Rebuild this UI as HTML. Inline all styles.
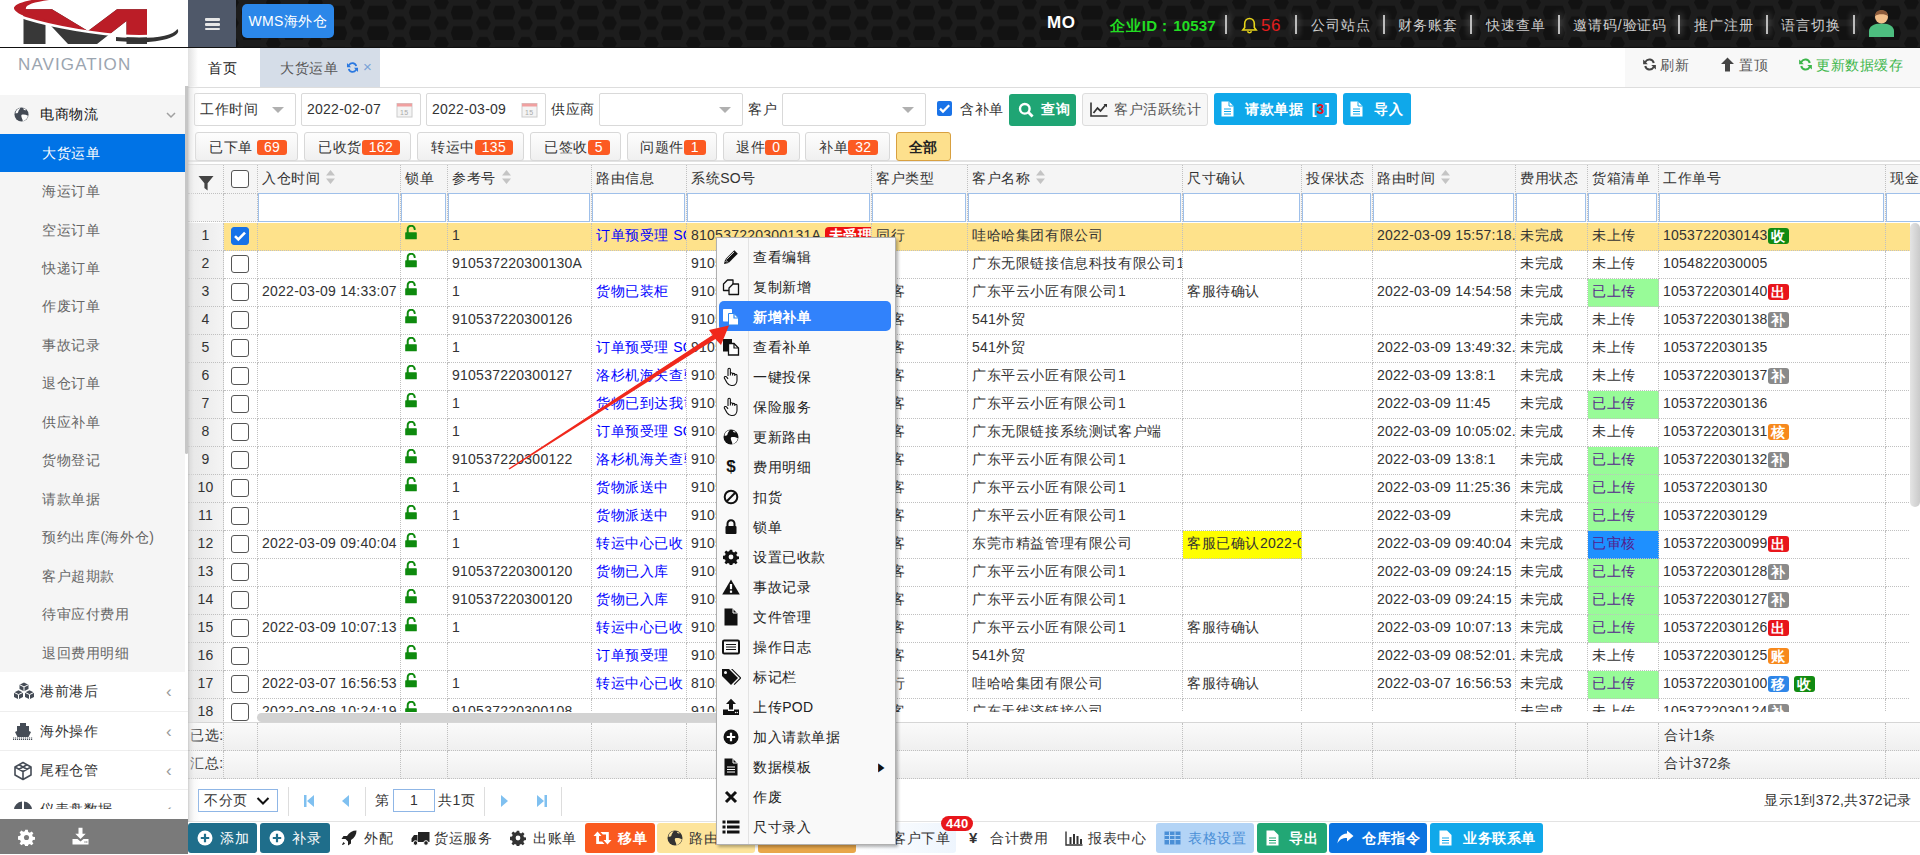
<!DOCTYPE html>
<html><head><meta charset="utf-8">
<style>
*{box-sizing:border-box}
html,body{margin:0;padding:0;width:1920px;height:855px;overflow:hidden;background:#fff;font-family:"Liberation Sans",sans-serif;font-size:14px;color:#333;letter-spacing:0.25px}
.abs{position:absolute}
/* logo */
#logo{position:absolute;left:0;top:0;width:188px;height:47px;background:#fff;overflow:hidden}
#hdrline{position:absolute;left:0;top:47px;width:1920px;height:1px;background:#111}
#header{position:absolute;left:188px;top:0;width:1732px;height:47px;background:#1a1a1a;overflow:hidden}
#burger{position:absolute;left:0;top:0;width:48px;height:47px;background:#4f5869}
#burger i{position:absolute;left:17px;width:15px;height:2.5px;background:#e6e6e6;border-radius:1px}
#wms{position:absolute;left:54px;top:4px;width:92px;height:34px;background:#2b87e9;border-radius:5px;color:#fff;font-size:14px;line-height:34px;text-align:center}
.hd{position:absolute;top:1px;height:47px;line-height:49px;color:#cfcfcf;font-size:14px;white-space:nowrap;letter-spacing:0.9px}
.hsep{position:absolute;top:15px;width:2px;height:19px;background:#bdbdbd;box-shadow:0 0 6px 2px rgba(255,255,255,0.18)}
/* sidebar */
#side{position:absolute;left:0;top:48px;width:188px;height:761px;background:#fff;overflow:hidden}
.navt{position:absolute;left:18px;top:6px;font-size:17px;letter-spacing:1.1px;color:#9ba5b0;line-height:22px}
.sub{position:relative;margin-top:46.7px;width:185px;background:#f5f5f5}
.mi{position:relative;height:38.9px;line-height:38.9px;color:#111;font-size:14px}
.mic{position:absolute;left:14px;top:12px;height:15px;line-height:0}.mic svg,.mic2 svg{display:block}
.mi .mt{position:absolute;left:40px}
.chev{position:absolute;left:166px;top:17px}
.si{height:38.47px;line-height:38.47px;padding-left:42px;color:#666;font-size:14px}
.si.act{background:#0073e6;color:#fff}
.mi2{position:relative;height:39.4px;line-height:39px;border-bottom:1px solid #eee;color:#333;background:#fff}
.mi2 .mt{position:absolute;left:40px}
.mic2{position:absolute;left:13px;top:10px;width:22px;height:20px;line-height:0}
.chl{position:absolute;left:166px;top:0;color:#999;font-size:17px}
#sfoot{position:absolute;left:0;top:819px;width:188px;height:35px;background:#7a7a7a}
/* content */
#content{position:absolute;left:188px;top:48px;width:1732px;height:807px;background:#fff;overflow:hidden}
#tabs{position:absolute;left:0;top:0;width:1732px;height:40px;border-bottom:1px solid #ddd;background:#fff}
.tab{position:absolute;top:0;height:39px;line-height:40px;font-size:14px}
#tabr{position:absolute;left:1437px;top:0;width:295px;height:39px;background:#f8f8f8}
.tr{position:absolute;top:-2px;line-height:38px;font-size:14px;color:#555;white-space:nowrap}
#shadow{position:absolute;left:188px;top:86px;width:12px;height:736px;z-index:5;background:linear-gradient(to right,rgba(190,190,190,0.75) 0px,rgba(215,215,215,0.55) 2px,rgba(235,235,235,0.3) 6px,rgba(255,255,255,0) 12px)}
#sthumb{position:absolute;left:185px;top:86px;width:3px;height:368px;background:#c6c6c6;border-radius:0 0 2px 2px;z-index:5}
.inp{position:absolute;height:33px;border:1px solid #d9d9d9;border-radius:2px;background:#fff;font-size:14px;line-height:31px;padding-left:5px;color:#333}
.tri{position:absolute;width:0;height:0;border-left:6px solid transparent;border-right:6px solid transparent;border-top:6px solid #b0b0b0}
.lbl{position:absolute;font-size:14px;color:#333;line-height:20px}
.btn{position:absolute;height:32px;border-radius:3px;color:#fff;font-size:14px;line-height:32px;white-space:nowrap}
.sbtn{position:absolute;top:84px;height:29px;border:1px solid #d8d8d8;border-radius:3px;background:linear-gradient(#fdfdfd,#f0f0f0);font-size:14px;line-height:28px;color:#333;white-space:nowrap}
.cnt{display:inline-block;background:#fc5a22;color:#fff;font-size:14px;line-height:15px;height:15px;padding:0 7px;border-radius:3px;vertical-align:0px}
/* grid */
#grid{position:absolute;left:0;top:116px;width:1732px;height:558px;overflow:hidden;border-top:1px solid #ddd}
.ghead,.gfilt{position:absolute;left:0;width:1732px;height:29px;background:#f5f5f5}
.c{position:absolute;top:0;height:100%;white-space:nowrap;overflow:hidden;border-right:1px dotted #c0c0c0;border-bottom:1px dotted #c0c0c0}
.hc{line-height:25px;padding-left:4px;color:#333}
.ht{vertical-align:middle}
.sort{vertical-align:middle;margin-left:5px;margin-top:-2px}
.funnel{position:absolute;left:10px;top:10px}
.cb{display:inline-block;width:18px;height:18px;border:1px solid #555;border-radius:3px;background:#fff;position:absolute;left:7px;top:5px}
.gr .cb{top:4px}
.cb.on{background:#1672e8;border-color:#1672e8}
.cb.on svg{position:absolute;left:-1px;top:-1px}
.fc{overflow:visible}
.fi{position:absolute;left:0;top:-1px;right:1px;bottom:-1px;border:1px solid #9fc0ea;background:#fff}
#rows{position:absolute;left:0;top:58px;width:1732px;height:500px;overflow:hidden}
.gr{position:absolute;left:0;width:1732px;height:28px;background:#fff}
.gr.sel{background:#fee28b}
.dc{line-height:25px;padding-left:4px;color:#333}
.rnc{background:linear-gradient(to right,#e6e6e6,#f4f4f4);text-align:center;padding-left:0}

.rn{display:block;text-align:center}
.cbc{padding-left:0}
.lockc svg{position:absolute;left:4px;top:2px}
.lnk{color:#0000ff}
.wsl{display:inline-block;background:#ee1111;color:#fff;border-radius:4px;padding:0 4px;line-height:17px;font-weight:bold}
.bdg{display:inline-block;color:#fff;font-weight:bold;font-size:14px;line-height:16px;height:16px;padding:0 3px;border-radius:3px;margin-left:1px;vertical-align:-1px}
#hscroll{position:absolute;left:69px;top:547px;width:1663px;height:10px;background:#fff}
#hthumb{position:absolute;left:0;top:1px;width:620px;height:9px;background:#d3d3d3;border-radius:5px}
#vscroll{position:absolute;left:1722px;top:58px;width:10px;height:490px;background:#fff}
#vthumb{position:absolute;left:0;top:0;width:10px;height:284px;background:linear-gradient(to right,#e4e4e4,#cacaca);border-radius:5px}
#summ{position:absolute;left:0;top:674px;width:1732px;height:59px;background:#f4f4f4;border-top:1px solid #d6d6d6;border-bottom:2px solid #dedede}
.sr{position:absolute;left:0;width:1732px;height:28px;background:linear-gradient(#fafafa,#efefef)}
#pager{position:absolute;left:0;top:731px;width:1732px;height:43px;background:#fff;border-bottom:1px solid #e3e3e3}
.psep{position:absolute;top:8px;width:1px;height:29px;background:#ddd}
#btool{position:absolute;left:0;top:775px;width:1732px;height:32px;background:#fff}
.tb{position:absolute;top:0;height:30px;line-height:30px;font-size:14px;color:#333;white-space:nowrap;border-radius:3px}
.tb svg{vertical-align:middle}
/* menu */
#cmenu{position:absolute;left:716px;top:237px;width:180px;height:608px;background:#f9f9f9;border:1px solid #b0b0b0;box-shadow:2px 2px 3px rgba(0,0,0,0.3)}
#cmenu .sepl{position:absolute;left:31px;top:0;width:1px;height:606px;background:#e3e3e3}
.mitem{position:relative;height:30px;line-height:30px;color:#222;font-size:14px;margin-left:2px;width:172px}
.mitem.mact{background:#3182fb;color:#fff;border-radius:5px}
.mico{position:absolute;left:1px;top:1px;width:22px;height:30px;display:flex;align-items:center;justify-content:center}
.mtxt{position:absolute;left:34px;top:1px}
.mact .mtxt{font-weight:bold}
.marr{position:absolute;left:158px;top:1px;font-size:12px;color:#111;transform:scaleX(0.7)}
.cj{letter-spacing:0.6px}
.hd .cj{letter-spacing:0.9px}
</style></head><body>

<div id="logo">
<svg width="188" height="47" viewBox="0 0 188 47">
 <defs><clipPath id="above"><path d="M0 0H188V29C172 35 150 37.5 120 35.5C80 32 40 24 16 15L0 15z"/></clipPath></defs>
 <path d="M23.5 9.3H52L88 31L117 9.3H147V44H126.5V21L97 44H68L45.5 20V44H23.5z" fill="#383838"/>
 <path d="M23.5 9.3H52L88 31L117 9.3H147V44H126.5V21L97 44H68L45.5 20V44H23.5z" fill="#bb1d27" clip-path="url(#above)"/>
 <path d="M14 7.5C16 3 30 -1 50 -2L70 -2C40 0 24 4 26 9C27 13 40 18 60 24L52 25C30 19 13 13 14 7.5z" fill="#bb1d27"/>
 <path d="M16 15C40 24 80 32 120 35.5C150 37.5 172 35 177 29" stroke="#fff" stroke-width="2.6" fill="none"/>
 <path d="M116 37C150 39.5 172 37 177.5 29C181 34 172 41 140 42.5L116 41z" fill="#333"/>
</svg>
</div>
<div id="hdrline"></div>

<div id="header">
<svg width="1732" height="47" style="position:absolute;left:0;top:0">
<defs><pattern id="hex" width="42" height="20.5" patternUnits="userSpaceOnUse" x="0" y="0"><rect width="42" height="20.5" fill="#1d1d1d"/><path d="M10.75 12.50L13.25 5.50H30.75L33.25 12.50L30.75 19.50H13.25zM-6.10 2.50L-2.60 -4.25H5.40L8.90 2.50L5.40 9.25H-2.60zM35.90 2.50L39.40 -4.25H47.40L50.90 2.50L47.40 9.25H39.40zM-6.10 23.00L-2.60 16.25H5.40L8.90 23.00L5.40 29.75H-2.60zM35.90 23.00L39.40 16.25H47.40L50.90 23.00L47.40 29.75H39.40z" fill="#121212"/></pattern></defs>
<rect width="1732" height="47" fill="url(#hex)"/>
</svg>
<div id="burger"><i style="top:18px"></i><i style="top:23px"></i><i style="top:27.5px"></i></div>
<div id="wms">WMS<span class="cj">海外仓</span></div>
<div class="hd" style="left:859px;color:#fff;font-weight:bold;font-size:17px;line-height:44px;letter-spacing:0.5px">MO</div>
<div class="hd" style="left:922px;color:#22dd22;font-weight:bold;font-size:15px;letter-spacing:0.2px"><span class="cj">企业</span>ID<span class="cj">：</span>10537</div>
<div class="hsep" style="left:1037px"></div>
<svg class="abs" style="left:1053px;top:17px" width="17" height="17" viewBox="0 0 17 17"><path d="M8.5 1.5c-3 0-4.8 2.3-4.8 5.3v3.6L1.8 13h13.4l-1.9-2.6V6.8c0-3-1.8-5.3-4.8-5.3z" fill="none" stroke="#e8d51a" stroke-width="1.6"/><path d="M6.5 14.3c0.4 1 1.1 1.5 2 1.5s1.6-0.5 2-1.5" fill="none" stroke="#e8d51a" stroke-width="1.6"/></svg>
<div class="hd" style="left:1073px;color:#e21d1d;font-size:17px;letter-spacing:0.5px">56</div>
<div class="hsep" style="left:1107px"></div>
<div class="hd" style="left:1123px"><span class="cj">公司站点</span></div>
<div class="hsep" style="left:1195px"></div>
<div class="hd" style="left:1210px"><span class="cj">财务账套</span></div>
<div class="hsep" style="left:1282px"></div>
<div class="hd" style="left:1298px"><span class="cj">快速查单</span></div>
<div class="hsep" style="left:1370px"></div>
<div class="hd" style="left:1385px"><span class="cj">邀请码</span>/<span class="cj">验证码</span></div>
<div class="hsep" style="left:1490px"></div>
<div class="hd" style="left:1506px"><span class="cj">推广注册</span></div>
<div class="hsep" style="left:1578px"></div>
<div class="hd" style="left:1593px"><span class="cj">语言切换</span></div>
<div class="hsep" style="left:1665px"></div>
<svg class="abs" style="left:1680px;top:9px" width="27" height="28" viewBox="0 0 27 28"><path d="M1 28v-6c0-4 4-7.5 12.5-7.5S26 18 26 22v6z" fill="#4dbd7f"/><circle cx="13.5" cy="8" r="6.5" fill="#f3c08c"/><path d="M7 7.2c0-4 2.8-6.2 6.5-6.2S20 3.2 20 7.2c-1.5-1.5-3.8-2-6.5-2S8.5 5.7 7 7.2z" fill="#8c5a3a"/></svg>
</div>

<div id="side">
<div class="navt">NAVIGATION</div>
<div class="sub">
<div class="mi top1"><span class="mic"><svg width="15" height="15" viewBox="0 0 16 16"><circle cx="8" cy="8" r="7.5" fill="#444b55"/><path d="M8.2 8.3C9.8 7.6 12.6 8 14.9 9.3 14.5 12.2 12.3 14.6 9.3 15.3 9.6 13.6 8.6 12.8 8.3 11.6 8 10.5 7.4 9 8.2 8.3z M2.6 3.6C3.6 2.4 5 1.5 6.6 1.1 6.3 2.3 5.4 3 4.9 3.9 4.4 4.9 4.6 6 3.4 6.6 2.8 6.9 2.2 6.6 1.5 6.8 1.6 5.6 2 4.5 2.6 3.6z M9.8 1.4C11 1.7 12.1 2.3 13 3.1 12.2 3.6 11 3.4 10.4 2.9z" fill="#fff"/></svg></span><span class="mt"><span class="cj">电商物流</span></span><svg class="chev" width="10" height="7" viewBox="0 0 10 7"><path d="M1 1l4 4 4-4" stroke="#a0a0a0" stroke-width="1.5" fill="none"/></svg></div>
<div class="si act"><span class="cj">大货运单</span></div>
<div class="si"><span class="cj">海运订单</span></div>
<div class="si"><span class="cj">空运订单</span></div>
<div class="si"><span class="cj">快递订单</span></div>
<div class="si"><span class="cj">作废订单</span></div>
<div class="si"><span class="cj">事故记录</span></div>
<div class="si"><span class="cj">退仓订单</span></div>
<div class="si"><span class="cj">供应补单</span></div>
<div class="si"><span class="cj">货物登记</span></div>
<div class="si"><span class="cj">请款单据</span></div>
<div class="si"><span class="cj">预约出库</span>(<span class="cj">海外仓</span>)</div>
<div class="si"><span class="cj">客户超期款</span></div>
<div class="si"><span class="cj">待审应付费用</span></div>
<div class="si"><span class="cj">退回费用明细</span></div>
</div>
<div class="mi2"><span class="mic2"><svg width="22" height="18" viewBox="0 0 22 18"><path d="M11 0.5l4.5 2.2v4.3L11 9.2 6.5 7V2.7z M5.5 8.2L10 10.4v4.6L5.5 17.2 1 15V10.4z M16.5 8.2L21 10.4v4.6l-4.5 2.2L12 15V10.4z" fill="#454c56"/><path d="M6.5 2.7L11 4.9l4.5-2.2 M1 10.4l4.5 2.2 4.5-2.2 M12 10.4l4.5 2.2 4.5-2.2 M11 4.9v4.3 M5.5 12.6v4.6 M16.5 12.6v4.6" stroke="#fff" stroke-width="1" fill="none"/></svg></span><span class="mt"><span class="cj">港前港后</span></span><span class="chl">&lsaquo;</span></div>
<div class="mi2"><span class="mic2"><svg width="20" height="18" viewBox="0 0 20 18"><path d="M7 1h6v3h3v5l2 1-2.5 5h-11L2 10l2-1V4h3z" fill="#454c56"/><path d="M0 16h20M0 17.5h20" stroke="#454c56" stroke-width="1" stroke-dasharray="1.2 0.8"/></svg></span><span class="mt"><span class="cj">海外操作</span></span><span class="chl">&lsaquo;</span></div>
<div class="mi2"><span class="mic2"><svg width="20" height="20" viewBox="0 0 20 20"><path d="M10 1.5l8 4.5v8L10 18.5 2 14V6z M2 6l8 4.5L18 6 M10 10.5v8 M6 3.8l8 4.5 M14 3.8L6 8.3" stroke="#454c56" stroke-width="1.6" fill="none" stroke-linejoin="round"/></svg></span><span class="mt"><span class="cj">尾程仓管</span></span><span class="chl">&lsaquo;</span></div>
<div class="mi2"><span class="mic2"><svg width="20" height="20" viewBox="0 0 20 20"><path d="M9 1.5A8.5 8.5 0 0 0 1 10h8z M11 1.5A8.5 8.5 0 0 1 19 10h-8z" fill="#454c56"/></svg></span><span class="mt"><span class="cj">仪表盘数据</span></span><span class="chl">&lsaquo;</span></div>
</div>
<div id="sfoot">
<svg class="abs" style="left:18px;top:10px" width="17" height="17" viewBox="0 0 16 16"><path d="M6.8 0.8h2.4l0.4 2 1.5 0.7 1.7-1.2 1.7 1.7-1.2 1.7 0.7 1.5 2 0.4v2.4l-2 0.4-0.7 1.5 1.2 1.7-1.7 1.7-1.7-1.2-1.5 0.7-0.4 2H6.8l-0.4-2-1.5-0.7-1.7 1.2-1.7-1.7 1.2-1.7-0.7-1.5-2-0.4V6.8l2-0.4 0.7-1.5-1.2-1.7 1.7-1.7 1.7 1.2 1.5-0.7z" fill="#fff"/><circle cx="8" cy="8" r="2.4" fill="#7a7a7a"/></svg>
<svg class="abs" style="left:71px;top:8px" width="19" height="18" viewBox="0 0 18 18"><path d="M7 0.8h4v6h3.2L9 12 3.8 6.8H7z" fill="#fff"/><path d="M1 12h5l3 2.5 3-2.5h5v5.5H1z" fill="#fff"/><circle cx="13.5" cy="15" r="0.7" fill="#7a7a7a"/><circle cx="15.3" cy="15" r="0.7" fill="#7a7a7a"/></svg>
</div>

<div id="content">
 <div id="tabs">
  <div class="tab" style="left:20px;color:#222"><span class="cj">首页</span></div>
  <div class="tab" style="left:72px;width:120px;height:39px;background:#d5dde8;color:#555;padding-left:20px"><span class="cj">大货运单</span>
   <svg class="abs" style="left:86px;top:13px" width="13" height="13" viewBox="0 0 16 16"><path d="M13.6 6.2A5.8 5.8 0 0 0 3 4.3L1.2 2.6V7.6h5L4.4 5.8A3.8 3.8 0 0 1 11.5 6.6z M2.4 9.8A5.8 5.8 0 0 0 13 11.7l1.8 1.7V8.4h-5l1.8 1.8A3.8 3.8 0 0 1 4.5 9.4z" fill="#2a78e0"/></svg>
   <span class="abs" style="left:103px;top:0;color:#79a2d6;font-size:15px;line-height:38px">×</span>
  </div>
  <div id="tabr">
   <svg class="abs" style="left:17px;top:9px" width="15" height="15" viewBox="0 0 16 16"><path d="M13.6 6.2A5.8 5.8 0 0 0 3 4.3L1.2 2.6V7.6h5L4.4 5.8A3.8 3.8 0 0 1 11.5 6.6z M2.4 9.8A5.8 5.8 0 0 0 13 11.7l1.8 1.7V8.4h-5l1.8 1.8A3.8 3.8 0 0 1 4.5 9.4z" fill="#444"/></svg>
   <span class="tr" style="left:35px"><span class="cj">刷新</span></span>
   <svg class="abs" style="left:95px;top:9px" width="15" height="15" viewBox="0 0 15 15"><path d="M7.5 0.5L14 7h-4v7.5H5V7H1z" fill="#444"/></svg>
   <span class="tr" style="left:114px"><span class="cj">置顶</span></span>
   <svg class="abs" style="left:173px;top:9px" width="15" height="15" viewBox="0 0 16 16"><path d="M13.6 6.2A5.8 5.8 0 0 0 3 4.3L1.2 2.6V7.6h5L4.4 5.8A3.8 3.8 0 0 1 11.5 6.6z M2.4 9.8A5.8 5.8 0 0 0 13 11.7l1.8 1.7V8.4h-5l1.8 1.8A3.8 3.8 0 0 1 4.5 9.4z" fill="#3cb64a"/></svg>
   <span class="tr" style="left:191px;color:#3cb64a"><span class="cj">更新数据缓存</span></span>
  </div>
 </div>
 <div class="abs" style="left:0;top:40px;width:1732px;height:74px;border-bottom:2px solid #e3e3e3"></div>

 <!-- toolbar row1 -->
 <div class="inp" style="left:6px;top:45px;width:102px"><span class="cj">工作时间</span><span class="tri" style="left:77px;top:13px"></span></div>
 <div class="inp" style="left:113px;top:45px;width:120px">2022-02-07
   <svg class="abs" style="left:94px;top:7px" width="17" height="17" viewBox="0 0 17 17"><rect x="1" y="2.5" width="15" height="13.5" fill="#f4f4f4" stroke="#ccc"/><rect x="1" y="2.5" width="15" height="3" fill="#f0a0a0"/><text x="4" y="13.5" font-size="7" fill="#aaa" font-family="Liberation Sans">15</text></svg></div>
 <div class="inp" style="left:238px;top:45px;width:120px">2022-03-09
   <svg class="abs" style="left:94px;top:7px" width="17" height="17" viewBox="0 0 17 17"><rect x="1" y="2.5" width="15" height="13.5" fill="#f4f4f4" stroke="#ccc"/><rect x="1" y="2.5" width="15" height="3" fill="#f0a0a0"/><text x="4" y="13.5" font-size="7" fill="#aaa" font-family="Liberation Sans">15</text></svg></div>
 <div class="lbl" style="left:363px;top:51px"><span class="cj">供应商</span></div>
 <div class="inp" style="left:411px;top:45px;width:144px"><span class="tri" style="left:119px;top:13px"></span></div>
 <div class="lbl" style="left:560px;top:51px"><span class="cj">客户</span></div>
 <div class="inp" style="left:594px;top:45px;width:144px"><span class="tri" style="left:119px;top:13px"></span></div>
 <div class="abs" style="left:749px;top:53px;width:15px;height:15px;background:#1a73e8;border-radius:2px"><svg width="15" height="15" viewBox="0 0 15 15" style="position:absolute;left:0;top:0"><path d="M3 7.6l3 3L12.2 4.2" stroke="#fff" stroke-width="2.2" fill="none"/></svg></div>
 <div class="lbl" style="left:772px;top:51px"><span class="cj">含补单</span></div>
 <div class="btn" style="left:821px;top:46px;width:67px;background:#1fa574"><svg class="abs" style="left:9px;top:8px" width="16" height="16" viewBox="0 0 16 16"><circle cx="6.8" cy="6.8" r="4.8" fill="none" stroke="#fff" stroke-width="2.4"/><path d="M10.3 10.3L14.6 14.6" stroke="#fff" stroke-width="2.8"/></svg><span class="abs" style="left:32px;top:-1px;font-weight:bold"><span class="cj">查询</span></span></div>
 <div class="btn" style="left:894px;top:45px;width:126px;height:33px;background:#f7f7f7;border:1px solid #ddd;color:#555;line-height:31px"><svg class="abs" style="left:7px;top:8px" width="18" height="15" viewBox="0 0 18 15"><path d="M1 0.5V14h16.5" stroke="#333" stroke-width="1.6" fill="none"/><path d="M3.5 11L7.5 6l3 3 5.5-6.5" stroke="#333" stroke-width="1.8" fill="none"/><path d="M13.5 2h3.5v3.5z" fill="#333"/></svg><span class="abs" style="left:31px"><span class="cj">客户活跃统计</span></span></div>
 <div class="btn" style="left:1026px;top:45px;width:123px;background:#0fa8ea"><svg class="abs" style="left:7px;top:8px" width="13" height="16" viewBox="0 0 13 16"><path d="M0.5 0.5h7.5l4.5 4.5v10.5H0.5z" fill="#fff"/><path d="M8 0.5V5h4.5" fill="none" stroke="#0fa8ea" stroke-width="1"/><path d="M3 8h7M3 10.5h7M3 13h7" stroke="#0fa8ea" stroke-width="1.1"/></svg><span class="abs" style="left:31px;font-weight:bold"><span class="cj">请款单据</span> &nbsp;[<span style="color:#e2181e;font-weight:bold">3</span>]</span></div>
 <div class="btn" style="left:1155px;top:45px;width:68px;background:#0fa8ea"><svg class="abs" style="left:7px;top:8px" width="13" height="16" viewBox="0 0 13 16"><path d="M0.5 0.5h7.5l4.5 4.5v10.5H0.5z" fill="#fff"/><path d="M8 0.5V5h4.5" fill="none" stroke="#0fa8ea" stroke-width="1"/><path d="M3 8h7M3 10.5h7M3 13h7" stroke="#0fa8ea" stroke-width="1.1"/></svg><span class="abs" style="left:31px;font-weight:bold"><span class="cj">导入</span></span></div>

 <!-- toolbar row2 -->
 <div class="sbtn" style="left:7px;width:103px;padding-left:13px"><span class="cj">已下单</span> <span class="cnt">69</span></div>
 <div class="sbtn" style="left:116px;width:107px;padding-left:13px"><span class="cj">已收货</span><span class="cnt">162</span></div>
 <div class="sbtn" style="left:229px;width:107px;padding-left:13px"><span class="cj">转运中</span><span class="cnt">135</span></div>
 <div class="sbtn" style="left:342px;width:91px;padding-left:13px"><span class="cj">已签收</span><span class="cnt">5</span></div>
 <div class="sbtn" style="left:439px;width:90px;padding-left:12px"><span class="cj">问题件</span><span class="cnt">1</span></div>
 <div class="sbtn" style="left:535px;width:77px;padding-left:12px"><span class="cj">退件</span><span class="cnt">0</span></div>
 <div class="sbtn" style="left:617px;width:85px;padding-left:13px"><span class="cj">补单</span><span class="cnt">32</span></div>
 <div class="sbtn" style="left:708px;width:55px;background:#fde08d;border-color:#d8a040;text-align:center;font-weight:bold;color:#222"><span class="cj">全部</span></div>

 <div id="grid">
<div class="ghead" style="top:0px">
<div class="c hc" style="left:0px;width:36px"><svg class="funnel" width="16" height="16" viewBox="0 0 16 16"><path d="M0.5 1h15L9.6 8.2V15.4L6.4 13V8.2z" fill="#444"/></svg></div>
<div class="c hc" style="left:36px;width:34px"><span class="cb"></span></div>
<div class="c hc" style="left:70px;width:143px"><span class="ht"><span class="cj">入仓时间</span></span><svg class="sort" width="11" height="16" viewBox="0 0 11 16"><path d="M5.5 1L10 6.5H1z M5.5 15L10 9.5H1z" fill="#c4c4c4"/></svg></div>
<div class="c hc" style="left:213px;width:47px"><span class="ht"><span class="cj">锁单</span></span></div>
<div class="c hc" style="left:260px;width:144px"><span class="ht"><span class="cj">参考号</span></span><svg class="sort" width="11" height="16" viewBox="0 0 11 16"><path d="M5.5 1L10 6.5H1z M5.5 15L10 9.5H1z" fill="#c4c4c4"/></svg></div>
<div class="c hc" style="left:404px;width:95px"><span class="ht"><span class="cj">路由信息</span></span></div>
<div class="c hc" style="left:499px;width:185px"><span class="ht"><span class="cj">系统</span>SO<span class="cj">号</span></span></div>
<div class="c hc" style="left:684px;width:96px"><span class="ht"><span class="cj">客户类型</span></span></div>
<div class="c hc" style="left:780px;width:215px"><span class="ht"><span class="cj">客户名称</span></span><svg class="sort" width="11" height="16" viewBox="0 0 11 16"><path d="M5.5 1L10 6.5H1z M5.5 15L10 9.5H1z" fill="#c4c4c4"/></svg></div>
<div class="c hc" style="left:995px;width:119px"><span class="ht"><span class="cj">尺寸确认</span></span></div>
<div class="c hc" style="left:1114px;width:71px"><span class="ht"><span class="cj">投保状态</span></span></div>
<div class="c hc" style="left:1185px;width:143px"><span class="ht"><span class="cj">路由时间</span></span><svg class="sort" width="11" height="16" viewBox="0 0 11 16"><path d="M5.5 1L10 6.5H1z M5.5 15L10 9.5H1z" fill="#c4c4c4"/></svg></div>
<div class="c hc" style="left:1328px;width:72px"><span class="ht"><span class="cj">费用状态</span></span></div>
<div class="c hc" style="left:1400px;width:71px"><span class="ht"><span class="cj">货箱清单</span></span></div>
<div class="c hc" style="left:1471px;width:227px"><span class="ht"><span class="cj">工作单号</span></span></div>
<div class="c hc" style="left:1698px;width:105px"><span class="ht"><span class="cj">现金</span></span></div>
</div>
<div class="gfilt" style="top:29px;height:28px">
<div class="c fc" style="left:0px;width:36px"></div>
<div class="c fc" style="left:36px;width:34px"></div>
<div class="c fc" style="left:70px;width:143px"><span class="fi"></span></div>
<div class="c fc" style="left:213px;width:47px"><span class="fi"></span></div>
<div class="c fc" style="left:260px;width:144px"><span class="fi"></span></div>
<div class="c fc" style="left:404px;width:95px"><span class="fi"></span></div>
<div class="c fc" style="left:499px;width:185px"><span class="fi"></span></div>
<div class="c fc" style="left:684px;width:96px"><span class="fi"></span></div>
<div class="c fc" style="left:780px;width:215px"><span class="fi"></span></div>
<div class="c fc" style="left:995px;width:119px"><span class="fi"></span></div>
<div class="c fc" style="left:1114px;width:71px"><span class="fi"></span></div>
<div class="c fc" style="left:1185px;width:143px"><span class="fi"></span></div>
<div class="c fc" style="left:1328px;width:72px"><span class="fi"></span></div>
<div class="c fc" style="left:1400px;width:71px"><span class="fi"></span></div>
<div class="c fc" style="left:1471px;width:227px"><span class="fi"></span></div>
<div class="c fc" style="left:1698px;width:105px"><span class="fi"></span></div>
</div>
  <div id="rows">
<div class="gr sel" style="top:0px">
<div class="c dc rnc" style="left:0px;width:36px;"><span class="rn">1</span></div>
<div class="c dc cbc" style="left:36px;width:34px;"><span class="cb on"><svg width="18" height="18" viewBox="0 0 18 18"><path d="M4 9.2l3.3 3.3L14 5.6" stroke="#fff" stroke-width="2.6" fill="none"/></svg></span></div>
<div class="c dc" style="left:70px;width:143px;"></div>
<div class="c dc lockc" style="left:213px;width:47px;"><svg width="12" height="15" viewBox="0 0 12 15"><path d="M2.7 8V4.3A3.5 3.5 0 0 1 9.7 4.1" fill="none" stroke="#0e8a0e" stroke-width="2" stroke-linecap="round"/><rect x="0.2" y="7.3" width="11.6" height="7" rx="0.6" fill="#0e8a0e"/></svg></div>
<div class="c dc" style="left:260px;width:144px;">1</div>
<div class="c dc" style="left:404px;width:95px;"><span class="lnk"><span class="cj">订单预受理</span> SO</span></div>
<div class="c dc" style="left:499px;width:185px;">810537220300131A <span class="wsl"><span class="cj">未受理</span></span></div>
<div class="c dc" style="left:684px;width:96px;"><span class="cj">同行</span></div>
<div class="c dc" style="left:780px;width:215px;"><span class="cj">哇哈哈集团有限公司</span></div>
<div class="c dc" style="left:995px;width:119px;"></div>
<div class="c dc" style="left:1114px;width:71px;"></div>
<div class="c dc" style="left:1185px;width:143px;">2022-03-09 15:57:18.</div>
<div class="c dc" style="left:1328px;width:72px;"><span class="cj">未完成</span></div>
<div class="c dc" style="left:1400px;width:71px;"><span class="cj">未上传</span></div>
<div class="c dc" style="left:1471px;width:227px;">1053722030143<span class="bdg" style="background:#118a11;"><span class="cj">收</span></span></div>
<div class="c dc" style="left:1698px;width:105px;"></div>
</div>
<div class="gr" style="top:28px">
<div class="c dc rnc" style="left:0px;width:36px;"><span class="rn">2</span></div>
<div class="c dc cbc" style="left:36px;width:34px;"><span class="cb"></span></div>
<div class="c dc" style="left:70px;width:143px;"></div>
<div class="c dc lockc" style="left:213px;width:47px;"><svg width="12" height="15" viewBox="0 0 12 15"><path d="M2.7 8V4.3A3.5 3.5 0 0 1 9.7 4.1" fill="none" stroke="#0e8a0e" stroke-width="2" stroke-linecap="round"/><rect x="0.2" y="7.3" width="11.6" height="7" rx="0.6" fill="#0e8a0e"/></svg></div>
<div class="c dc" style="left:260px;width:144px;">910537220300130A</div>
<div class="c dc" style="left:404px;width:95px;"><span class="lnk"></span></div>
<div class="c dc" style="left:499px;width:185px;">910537220300130A</div>
<div class="c dc" style="left:684px;width:96px;"></div>
<div class="c dc" style="left:780px;width:215px;"><span class="cj">广东无限链接信息科技有限公司</span>1</div>
<div class="c dc" style="left:995px;width:119px;"></div>
<div class="c dc" style="left:1114px;width:71px;"></div>
<div class="c dc" style="left:1185px;width:143px;"></div>
<div class="c dc" style="left:1328px;width:72px;"><span class="cj">未完成</span></div>
<div class="c dc" style="left:1400px;width:71px;"><span class="cj">未上传</span></div>
<div class="c dc" style="left:1471px;width:227px;">1054822030005</div>
<div class="c dc" style="left:1698px;width:105px;"></div>
</div>
<div class="gr" style="top:56px">
<div class="c dc rnc" style="left:0px;width:36px;"><span class="rn">3</span></div>
<div class="c dc cbc" style="left:36px;width:34px;"><span class="cb"></span></div>
<div class="c dc" style="left:70px;width:143px;">2022-03-09 14:33:07</div>
<div class="c dc lockc" style="left:213px;width:47px;"><svg width="12" height="15" viewBox="0 0 12 15"><path d="M2.7 8V4.3A3.5 3.5 0 0 1 9.7 4.1" fill="none" stroke="#0e8a0e" stroke-width="2" stroke-linecap="round"/><rect x="0.2" y="7.3" width="11.6" height="7" rx="0.6" fill="#0e8a0e"/></svg></div>
<div class="c dc" style="left:260px;width:144px;">1</div>
<div class="c dc" style="left:404px;width:95px;"><span class="lnk"><span class="cj">货物已装柜</span></span></div>
<div class="c dc" style="left:499px;width:185px;">910537220300140</div>
<div class="c dc" style="left:684px;width:96px;"><span class="cj">直客</span></div>
<div class="c dc" style="left:780px;width:215px;"><span class="cj">广东平云小匠有限公司</span>1</div>
<div class="c dc" style="left:995px;width:119px;"><span class="cj">客服待确认</span></div>
<div class="c dc" style="left:1114px;width:71px;"></div>
<div class="c dc" style="left:1185px;width:143px;">2022-03-09 14:54:58</div>
<div class="c dc" style="left:1328px;width:72px;"><span class="cj">未完成</span></div>
<div class="c dc" style="left:1400px;width:71px;background:#98fb98;color:#551a8b;"><span class="cj">已上传</span></div>
<div class="c dc" style="left:1471px;width:227px;">1053722030140<span class="bdg" style="background:#e8151b;"><span class="cj">出</span></span></div>
<div class="c dc" style="left:1698px;width:105px;"></div>
</div>
<div class="gr" style="top:84px">
<div class="c dc rnc" style="left:0px;width:36px;"><span class="rn">4</span></div>
<div class="c dc cbc" style="left:36px;width:34px;"><span class="cb"></span></div>
<div class="c dc" style="left:70px;width:143px;"></div>
<div class="c dc lockc" style="left:213px;width:47px;"><svg width="12" height="15" viewBox="0 0 12 15"><path d="M2.7 8V4.3A3.5 3.5 0 0 1 9.7 4.1" fill="none" stroke="#0e8a0e" stroke-width="2" stroke-linecap="round"/><rect x="0.2" y="7.3" width="11.6" height="7" rx="0.6" fill="#0e8a0e"/></svg></div>
<div class="c dc" style="left:260px;width:144px;">910537220300126</div>
<div class="c dc" style="left:404px;width:95px;"><span class="lnk"></span></div>
<div class="c dc" style="left:499px;width:185px;">910537220300126</div>
<div class="c dc" style="left:684px;width:96px;"><span class="cj">直客</span></div>
<div class="c dc" style="left:780px;width:215px;">541<span class="cj">外贸</span></div>
<div class="c dc" style="left:995px;width:119px;"></div>
<div class="c dc" style="left:1114px;width:71px;"></div>
<div class="c dc" style="left:1185px;width:143px;"></div>
<div class="c dc" style="left:1328px;width:72px;"><span class="cj">未完成</span></div>
<div class="c dc" style="left:1400px;width:71px;"><span class="cj">未上传</span></div>
<div class="c dc" style="left:1471px;width:227px;">1053722030138<span class="bdg" style="background:#8a8a8a;"><span class="cj">补</span></span></div>
<div class="c dc" style="left:1698px;width:105px;"></div>
</div>
<div class="gr" style="top:112px">
<div class="c dc rnc" style="left:0px;width:36px;"><span class="rn">5</span></div>
<div class="c dc cbc" style="left:36px;width:34px;"><span class="cb"></span></div>
<div class="c dc" style="left:70px;width:143px;"></div>
<div class="c dc lockc" style="left:213px;width:47px;"><svg width="12" height="15" viewBox="0 0 12 15"><path d="M2.7 8V4.3A3.5 3.5 0 0 1 9.7 4.1" fill="none" stroke="#0e8a0e" stroke-width="2" stroke-linecap="round"/><rect x="0.2" y="7.3" width="11.6" height="7" rx="0.6" fill="#0e8a0e"/></svg></div>
<div class="c dc" style="left:260px;width:144px;">1</div>
<div class="c dc" style="left:404px;width:95px;"><span class="lnk"><span class="cj">订单预受理</span> SO</span></div>
<div class="c dc" style="left:499px;width:185px;">910537220300135</div>
<div class="c dc" style="left:684px;width:96px;"><span class="cj">直客</span></div>
<div class="c dc" style="left:780px;width:215px;">541<span class="cj">外贸</span></div>
<div class="c dc" style="left:995px;width:119px;"></div>
<div class="c dc" style="left:1114px;width:71px;"></div>
<div class="c dc" style="left:1185px;width:143px;">2022-03-09 13:49:32.</div>
<div class="c dc" style="left:1328px;width:72px;"><span class="cj">未完成</span></div>
<div class="c dc" style="left:1400px;width:71px;"><span class="cj">未上传</span></div>
<div class="c dc" style="left:1471px;width:227px;">1053722030135</div>
<div class="c dc" style="left:1698px;width:105px;"></div>
</div>
<div class="gr" style="top:140px">
<div class="c dc rnc" style="left:0px;width:36px;"><span class="rn">6</span></div>
<div class="c dc cbc" style="left:36px;width:34px;"><span class="cb"></span></div>
<div class="c dc" style="left:70px;width:143px;"></div>
<div class="c dc lockc" style="left:213px;width:47px;"><svg width="12" height="15" viewBox="0 0 12 15"><path d="M2.7 8V4.3A3.5 3.5 0 0 1 9.7 4.1" fill="none" stroke="#0e8a0e" stroke-width="2" stroke-linecap="round"/><rect x="0.2" y="7.3" width="11.6" height="7" rx="0.6" fill="#0e8a0e"/></svg></div>
<div class="c dc" style="left:260px;width:144px;">910537220300127</div>
<div class="c dc" style="left:404px;width:95px;"><span class="lnk"><span class="cj">洛杉机海关查验</span></span></div>
<div class="c dc" style="left:499px;width:185px;">910537220300137</div>
<div class="c dc" style="left:684px;width:96px;"><span class="cj">直客</span></div>
<div class="c dc" style="left:780px;width:215px;"><span class="cj">广东平云小匠有限公司</span>1</div>
<div class="c dc" style="left:995px;width:119px;"></div>
<div class="c dc" style="left:1114px;width:71px;"></div>
<div class="c dc" style="left:1185px;width:143px;">2022-03-09 13:8:1</div>
<div class="c dc" style="left:1328px;width:72px;"><span class="cj">未完成</span></div>
<div class="c dc" style="left:1400px;width:71px;"><span class="cj">未上传</span></div>
<div class="c dc" style="left:1471px;width:227px;">1053722030137<span class="bdg" style="background:#8a8a8a;"><span class="cj">补</span></span></div>
<div class="c dc" style="left:1698px;width:105px;"></div>
</div>
<div class="gr" style="top:168px">
<div class="c dc rnc" style="left:0px;width:36px;"><span class="rn">7</span></div>
<div class="c dc cbc" style="left:36px;width:34px;"><span class="cb"></span></div>
<div class="c dc" style="left:70px;width:143px;"></div>
<div class="c dc lockc" style="left:213px;width:47px;"><svg width="12" height="15" viewBox="0 0 12 15"><path d="M2.7 8V4.3A3.5 3.5 0 0 1 9.7 4.1" fill="none" stroke="#0e8a0e" stroke-width="2" stroke-linecap="round"/><rect x="0.2" y="7.3" width="11.6" height="7" rx="0.6" fill="#0e8a0e"/></svg></div>
<div class="c dc" style="left:260px;width:144px;">1</div>
<div class="c dc" style="left:404px;width:95px;"><span class="lnk"><span class="cj">货物已到达我司</span></span></div>
<div class="c dc" style="left:499px;width:185px;">910537220300136</div>
<div class="c dc" style="left:684px;width:96px;"><span class="cj">直客</span></div>
<div class="c dc" style="left:780px;width:215px;"><span class="cj">广东平云小匠有限公司</span>1</div>
<div class="c dc" style="left:995px;width:119px;"></div>
<div class="c dc" style="left:1114px;width:71px;"></div>
<div class="c dc" style="left:1185px;width:143px;">2022-03-09 11:45</div>
<div class="c dc" style="left:1328px;width:72px;"><span class="cj">未完成</span></div>
<div class="c dc" style="left:1400px;width:71px;background:#98fb98;color:#551a8b;"><span class="cj">已上传</span></div>
<div class="c dc" style="left:1471px;width:227px;">1053722030136</div>
<div class="c dc" style="left:1698px;width:105px;"></div>
</div>
<div class="gr" style="top:196px">
<div class="c dc rnc" style="left:0px;width:36px;"><span class="rn">8</span></div>
<div class="c dc cbc" style="left:36px;width:34px;"><span class="cb"></span></div>
<div class="c dc" style="left:70px;width:143px;"></div>
<div class="c dc lockc" style="left:213px;width:47px;"><svg width="12" height="15" viewBox="0 0 12 15"><path d="M2.7 8V4.3A3.5 3.5 0 0 1 9.7 4.1" fill="none" stroke="#0e8a0e" stroke-width="2" stroke-linecap="round"/><rect x="0.2" y="7.3" width="11.6" height="7" rx="0.6" fill="#0e8a0e"/></svg></div>
<div class="c dc" style="left:260px;width:144px;">1</div>
<div class="c dc" style="left:404px;width:95px;"><span class="lnk"><span class="cj">订单预受理</span> SO</span></div>
<div class="c dc" style="left:499px;width:185px;">910537220300131</div>
<div class="c dc" style="left:684px;width:96px;"><span class="cj">直客</span></div>
<div class="c dc" style="left:780px;width:215px;"><span class="cj">广东无限链接系统测试客户端</span></div>
<div class="c dc" style="left:995px;width:119px;"></div>
<div class="c dc" style="left:1114px;width:71px;"></div>
<div class="c dc" style="left:1185px;width:143px;">2022-03-09 10:05:02.</div>
<div class="c dc" style="left:1328px;width:72px;"><span class="cj">未完成</span></div>
<div class="c dc" style="left:1400px;width:71px;"><span class="cj">未上传</span></div>
<div class="c dc" style="left:1471px;width:227px;">1053722030131<span class="bdg" style="background:#f7891c;"><span class="cj">核</span></span></div>
<div class="c dc" style="left:1698px;width:105px;"></div>
</div>
<div class="gr" style="top:224px">
<div class="c dc rnc" style="left:0px;width:36px;"><span class="rn">9</span></div>
<div class="c dc cbc" style="left:36px;width:34px;"><span class="cb"></span></div>
<div class="c dc" style="left:70px;width:143px;"></div>
<div class="c dc lockc" style="left:213px;width:47px;"><svg width="12" height="15" viewBox="0 0 12 15"><path d="M2.7 8V4.3A3.5 3.5 0 0 1 9.7 4.1" fill="none" stroke="#0e8a0e" stroke-width="2" stroke-linecap="round"/><rect x="0.2" y="7.3" width="11.6" height="7" rx="0.6" fill="#0e8a0e"/></svg></div>
<div class="c dc" style="left:260px;width:144px;">910537220300122</div>
<div class="c dc" style="left:404px;width:95px;"><span class="lnk"><span class="cj">洛杉机海关查验</span></span></div>
<div class="c dc" style="left:499px;width:185px;">910537220300132</div>
<div class="c dc" style="left:684px;width:96px;"><span class="cj">直客</span></div>
<div class="c dc" style="left:780px;width:215px;"><span class="cj">广东平云小匠有限公司</span>1</div>
<div class="c dc" style="left:995px;width:119px;"></div>
<div class="c dc" style="left:1114px;width:71px;"></div>
<div class="c dc" style="left:1185px;width:143px;">2022-03-09 13:8:1</div>
<div class="c dc" style="left:1328px;width:72px;"><span class="cj">未完成</span></div>
<div class="c dc" style="left:1400px;width:71px;background:#98fb98;color:#551a8b;"><span class="cj">已上传</span></div>
<div class="c dc" style="left:1471px;width:227px;">1053722030132<span class="bdg" style="background:#8a8a8a;"><span class="cj">补</span></span></div>
<div class="c dc" style="left:1698px;width:105px;"></div>
</div>
<div class="gr" style="top:252px">
<div class="c dc rnc" style="left:0px;width:36px;"><span class="rn">10</span></div>
<div class="c dc cbc" style="left:36px;width:34px;"><span class="cb"></span></div>
<div class="c dc" style="left:70px;width:143px;"></div>
<div class="c dc lockc" style="left:213px;width:47px;"><svg width="12" height="15" viewBox="0 0 12 15"><path d="M2.7 8V4.3A3.5 3.5 0 0 1 9.7 4.1" fill="none" stroke="#0e8a0e" stroke-width="2" stroke-linecap="round"/><rect x="0.2" y="7.3" width="11.6" height="7" rx="0.6" fill="#0e8a0e"/></svg></div>
<div class="c dc" style="left:260px;width:144px;">1</div>
<div class="c dc" style="left:404px;width:95px;"><span class="lnk"><span class="cj">货物派送中</span></span></div>
<div class="c dc" style="left:499px;width:185px;">910537220300130</div>
<div class="c dc" style="left:684px;width:96px;"><span class="cj">直客</span></div>
<div class="c dc" style="left:780px;width:215px;"><span class="cj">广东平云小匠有限公司</span>1</div>
<div class="c dc" style="left:995px;width:119px;"></div>
<div class="c dc" style="left:1114px;width:71px;"></div>
<div class="c dc" style="left:1185px;width:143px;">2022-03-09 11:25:36</div>
<div class="c dc" style="left:1328px;width:72px;"><span class="cj">未完成</span></div>
<div class="c dc" style="left:1400px;width:71px;background:#98fb98;color:#551a8b;"><span class="cj">已上传</span></div>
<div class="c dc" style="left:1471px;width:227px;">1053722030130</div>
<div class="c dc" style="left:1698px;width:105px;"></div>
</div>
<div class="gr" style="top:280px">
<div class="c dc rnc" style="left:0px;width:36px;"><span class="rn">11</span></div>
<div class="c dc cbc" style="left:36px;width:34px;"><span class="cb"></span></div>
<div class="c dc" style="left:70px;width:143px;"></div>
<div class="c dc lockc" style="left:213px;width:47px;"><svg width="12" height="15" viewBox="0 0 12 15"><path d="M2.7 8V4.3A3.5 3.5 0 0 1 9.7 4.1" fill="none" stroke="#0e8a0e" stroke-width="2" stroke-linecap="round"/><rect x="0.2" y="7.3" width="11.6" height="7" rx="0.6" fill="#0e8a0e"/></svg></div>
<div class="c dc" style="left:260px;width:144px;">1</div>
<div class="c dc" style="left:404px;width:95px;"><span class="lnk"><span class="cj">货物派送中</span></span></div>
<div class="c dc" style="left:499px;width:185px;">910537220300129</div>
<div class="c dc" style="left:684px;width:96px;"><span class="cj">直客</span></div>
<div class="c dc" style="left:780px;width:215px;"><span class="cj">广东平云小匠有限公司</span>1</div>
<div class="c dc" style="left:995px;width:119px;"></div>
<div class="c dc" style="left:1114px;width:71px;"></div>
<div class="c dc" style="left:1185px;width:143px;">2022-03-09</div>
<div class="c dc" style="left:1328px;width:72px;"><span class="cj">未完成</span></div>
<div class="c dc" style="left:1400px;width:71px;background:#98fb98;color:#551a8b;"><span class="cj">已上传</span></div>
<div class="c dc" style="left:1471px;width:227px;">1053722030129</div>
<div class="c dc" style="left:1698px;width:105px;"></div>
</div>
<div class="gr" style="top:308px">
<div class="c dc rnc" style="left:0px;width:36px;"><span class="rn">12</span></div>
<div class="c dc cbc" style="left:36px;width:34px;"><span class="cb"></span></div>
<div class="c dc" style="left:70px;width:143px;">2022-03-09 09:40:04</div>
<div class="c dc lockc" style="left:213px;width:47px;"><svg width="12" height="15" viewBox="0 0 12 15"><path d="M2.7 8V4.3A3.5 3.5 0 0 1 9.7 4.1" fill="none" stroke="#0e8a0e" stroke-width="2" stroke-linecap="round"/><rect x="0.2" y="7.3" width="11.6" height="7" rx="0.6" fill="#0e8a0e"/></svg></div>
<div class="c dc" style="left:260px;width:144px;">1</div>
<div class="c dc" style="left:404px;width:95px;"><span class="lnk"><span class="cj">转运中心已收：货物</span></span></div>
<div class="c dc" style="left:499px;width:185px;">910537220300099</div>
<div class="c dc" style="left:684px;width:96px;"><span class="cj">直客</span></div>
<div class="c dc" style="left:780px;width:215px;"><span class="cj">东莞市精益管理有限公司</span></div>
<div class="c dc" style="left:995px;width:119px;background:#ffff00;"><span class="cj">客服已确认</span>2022-03</div>
<div class="c dc" style="left:1114px;width:71px;"></div>
<div class="c dc" style="left:1185px;width:143px;">2022-03-09 09:40:04</div>
<div class="c dc" style="left:1328px;width:72px;"><span class="cj">未完成</span></div>
<div class="c dc" style="left:1400px;width:71px;background:#1e90ff;color:#551a8b;"><span class="cj">已审核</span></div>
<div class="c dc" style="left:1471px;width:227px;">1053722030099<span class="bdg" style="background:#e8151b;"><span class="cj">出</span></span></div>
<div class="c dc" style="left:1698px;width:105px;"></div>
</div>
<div class="gr" style="top:336px">
<div class="c dc rnc" style="left:0px;width:36px;"><span class="rn">13</span></div>
<div class="c dc cbc" style="left:36px;width:34px;"><span class="cb"></span></div>
<div class="c dc" style="left:70px;width:143px;"></div>
<div class="c dc lockc" style="left:213px;width:47px;"><svg width="12" height="15" viewBox="0 0 12 15"><path d="M2.7 8V4.3A3.5 3.5 0 0 1 9.7 4.1" fill="none" stroke="#0e8a0e" stroke-width="2" stroke-linecap="round"/><rect x="0.2" y="7.3" width="11.6" height="7" rx="0.6" fill="#0e8a0e"/></svg></div>
<div class="c dc" style="left:260px;width:144px;">910537220300120</div>
<div class="c dc" style="left:404px;width:95px;"><span class="lnk"><span class="cj">货物已入库</span></span></div>
<div class="c dc" style="left:499px;width:185px;">910537220300128</div>
<div class="c dc" style="left:684px;width:96px;"><span class="cj">直客</span></div>
<div class="c dc" style="left:780px;width:215px;"><span class="cj">广东平云小匠有限公司</span>1</div>
<div class="c dc" style="left:995px;width:119px;"></div>
<div class="c dc" style="left:1114px;width:71px;"></div>
<div class="c dc" style="left:1185px;width:143px;">2022-03-09 09:24:15</div>
<div class="c dc" style="left:1328px;width:72px;"><span class="cj">未完成</span></div>
<div class="c dc" style="left:1400px;width:71px;background:#98fb98;color:#551a8b;"><span class="cj">已上传</span></div>
<div class="c dc" style="left:1471px;width:227px;">1053722030128<span class="bdg" style="background:#8a8a8a;"><span class="cj">补</span></span></div>
<div class="c dc" style="left:1698px;width:105px;"></div>
</div>
<div class="gr" style="top:364px">
<div class="c dc rnc" style="left:0px;width:36px;"><span class="rn">14</span></div>
<div class="c dc cbc" style="left:36px;width:34px;"><span class="cb"></span></div>
<div class="c dc" style="left:70px;width:143px;"></div>
<div class="c dc lockc" style="left:213px;width:47px;"><svg width="12" height="15" viewBox="0 0 12 15"><path d="M2.7 8V4.3A3.5 3.5 0 0 1 9.7 4.1" fill="none" stroke="#0e8a0e" stroke-width="2" stroke-linecap="round"/><rect x="0.2" y="7.3" width="11.6" height="7" rx="0.6" fill="#0e8a0e"/></svg></div>
<div class="c dc" style="left:260px;width:144px;">910537220300120</div>
<div class="c dc" style="left:404px;width:95px;"><span class="lnk"><span class="cj">货物已入库</span></span></div>
<div class="c dc" style="left:499px;width:185px;">910537220300127</div>
<div class="c dc" style="left:684px;width:96px;"><span class="cj">直客</span></div>
<div class="c dc" style="left:780px;width:215px;"><span class="cj">广东平云小匠有限公司</span>1</div>
<div class="c dc" style="left:995px;width:119px;"></div>
<div class="c dc" style="left:1114px;width:71px;"></div>
<div class="c dc" style="left:1185px;width:143px;">2022-03-09 09:24:15</div>
<div class="c dc" style="left:1328px;width:72px;"><span class="cj">未完成</span></div>
<div class="c dc" style="left:1400px;width:71px;background:#98fb98;color:#551a8b;"><span class="cj">已上传</span></div>
<div class="c dc" style="left:1471px;width:227px;">1053722030127<span class="bdg" style="background:#8a8a8a;"><span class="cj">补</span></span></div>
<div class="c dc" style="left:1698px;width:105px;"></div>
</div>
<div class="gr" style="top:392px">
<div class="c dc rnc" style="left:0px;width:36px;"><span class="rn">15</span></div>
<div class="c dc cbc" style="left:36px;width:34px;"><span class="cb"></span></div>
<div class="c dc" style="left:70px;width:143px;">2022-03-09 10:07:13</div>
<div class="c dc lockc" style="left:213px;width:47px;"><svg width="12" height="15" viewBox="0 0 12 15"><path d="M2.7 8V4.3A3.5 3.5 0 0 1 9.7 4.1" fill="none" stroke="#0e8a0e" stroke-width="2" stroke-linecap="round"/><rect x="0.2" y="7.3" width="11.6" height="7" rx="0.6" fill="#0e8a0e"/></svg></div>
<div class="c dc" style="left:260px;width:144px;">1</div>
<div class="c dc" style="left:404px;width:95px;"><span class="lnk"><span class="cj">转运中心已收：货物</span></span></div>
<div class="c dc" style="left:499px;width:185px;">910537220300126</div>
<div class="c dc" style="left:684px;width:96px;"><span class="cj">直客</span></div>
<div class="c dc" style="left:780px;width:215px;"><span class="cj">广东平云小匠有限公司</span>1</div>
<div class="c dc" style="left:995px;width:119px;"><span class="cj">客服待确认</span></div>
<div class="c dc" style="left:1114px;width:71px;"></div>
<div class="c dc" style="left:1185px;width:143px;">2022-03-09 10:07:13</div>
<div class="c dc" style="left:1328px;width:72px;"><span class="cj">未完成</span></div>
<div class="c dc" style="left:1400px;width:71px;background:#98fb98;color:#551a8b;"><span class="cj">已上传</span></div>
<div class="c dc" style="left:1471px;width:227px;">1053722030126<span class="bdg" style="background:#e8151b;"><span class="cj">出</span></span></div>
<div class="c dc" style="left:1698px;width:105px;"></div>
</div>
<div class="gr" style="top:420px">
<div class="c dc rnc" style="left:0px;width:36px;"><span class="rn">16</span></div>
<div class="c dc cbc" style="left:36px;width:34px;"><span class="cb"></span></div>
<div class="c dc" style="left:70px;width:143px;"></div>
<div class="c dc lockc" style="left:213px;width:47px;"><svg width="12" height="15" viewBox="0 0 12 15"><path d="M2.7 8V4.3A3.5 3.5 0 0 1 9.7 4.1" fill="none" stroke="#0e8a0e" stroke-width="2" stroke-linecap="round"/><rect x="0.2" y="7.3" width="11.6" height="7" rx="0.6" fill="#0e8a0e"/></svg></div>
<div class="c dc" style="left:260px;width:144px;"></div>
<div class="c dc" style="left:404px;width:95px;"><span class="lnk"><span class="cj">订单预受理</span></span></div>
<div class="c dc" style="left:499px;width:185px;">910537220300125</div>
<div class="c dc" style="left:684px;width:96px;"><span class="cj">直客</span></div>
<div class="c dc" style="left:780px;width:215px;">541<span class="cj">外贸</span></div>
<div class="c dc" style="left:995px;width:119px;"></div>
<div class="c dc" style="left:1114px;width:71px;"></div>
<div class="c dc" style="left:1185px;width:143px;">2022-03-09 08:52:01.</div>
<div class="c dc" style="left:1328px;width:72px;"><span class="cj">未完成</span></div>
<div class="c dc" style="left:1400px;width:71px;"><span class="cj">未上传</span></div>
<div class="c dc" style="left:1471px;width:227px;">1053722030125<span class="bdg" style="background:#f7891c;"><span class="cj">账</span></span></div>
<div class="c dc" style="left:1698px;width:105px;"></div>
</div>
<div class="gr" style="top:448px">
<div class="c dc rnc" style="left:0px;width:36px;"><span class="rn">17</span></div>
<div class="c dc cbc" style="left:36px;width:34px;"><span class="cb"></span></div>
<div class="c dc" style="left:70px;width:143px;">2022-03-07 16:56:53</div>
<div class="c dc lockc" style="left:213px;width:47px;"><svg width="12" height="15" viewBox="0 0 12 15"><path d="M2.7 8V4.3A3.5 3.5 0 0 1 9.7 4.1" fill="none" stroke="#0e8a0e" stroke-width="2" stroke-linecap="round"/><rect x="0.2" y="7.3" width="11.6" height="7" rx="0.6" fill="#0e8a0e"/></svg></div>
<div class="c dc" style="left:260px;width:144px;">1</div>
<div class="c dc" style="left:404px;width:95px;"><span class="lnk"><span class="cj">转运中心已收：货物</span></span></div>
<div class="c dc" style="left:499px;width:185px;">810537220300100</div>
<div class="c dc" style="left:684px;width:96px;"><span class="cj">同行</span></div>
<div class="c dc" style="left:780px;width:215px;"><span class="cj">哇哈哈集团有限公司</span></div>
<div class="c dc" style="left:995px;width:119px;"><span class="cj">客服待确认</span></div>
<div class="c dc" style="left:1114px;width:71px;"></div>
<div class="c dc" style="left:1185px;width:143px;">2022-03-07 16:56:53</div>
<div class="c dc" style="left:1328px;width:72px;"><span class="cj">未完成</span></div>
<div class="c dc" style="left:1400px;width:71px;background:#98fb98;color:#551a8b;"><span class="cj">已上传</span></div>
<div class="c dc" style="left:1471px;width:227px;">1053722030100<span class="bdg" style="background:#2f86e8;"><span class="cj">移</span></span><span class="bdg" style="background:#118a11;margin-left:5px"><span class="cj">收</span></span></div>
<div class="c dc" style="left:1698px;width:105px;"></div>
</div>
<div class="gr" style="top:476px">
<div class="c dc rnc" style="left:0px;width:36px;"><span class="rn">18</span></div>
<div class="c dc cbc" style="left:36px;width:34px;"><span class="cb"></span></div>
<div class="c dc" style="left:70px;width:143px;">2022-03-08 10:24:19</div>
<div class="c dc lockc" style="left:213px;width:47px;"><svg width="12" height="15" viewBox="0 0 12 15"><path d="M2.7 8V4.3A3.5 3.5 0 0 1 9.7 4.1" fill="none" stroke="#0e8a0e" stroke-width="2" stroke-linecap="round"/><rect x="0.2" y="7.3" width="11.6" height="7" rx="0.6" fill="#0e8a0e"/></svg></div>
<div class="c dc" style="left:260px;width:144px;">910537220300108</div>
<div class="c dc" style="left:404px;width:95px;"><span class="lnk"></span></div>
<div class="c dc" style="left:499px;width:185px;">910537220300124</div>
<div class="c dc" style="left:684px;width:96px;"><span class="cj">直客</span></div>
<div class="c dc" style="left:780px;width:215px;"><span class="cj">广东天线济链接公司</span></div>
<div class="c dc" style="left:995px;width:119px;"></div>
<div class="c dc" style="left:1114px;width:71px;"></div>
<div class="c dc" style="left:1185px;width:143px;"></div>
<div class="c dc" style="left:1328px;width:72px;"><span class="cj">未完成</span></div>
<div class="c dc" style="left:1400px;width:71px;"><span class="cj">未上传</span></div>
<div class="c dc" style="left:1471px;width:227px;">1053722030124<span class="bdg" style="background:#8a8a8a;"><span class="cj">补</span></span></div>
<div class="c dc" style="left:1698px;width:105px;"></div>
</div>
  </div>
  <div id="vscroll"><div id="vthumb"></div></div>
  <div id="hscroll"><div id="hthumb"></div></div>
 </div>

 <div id="summ">
  <div class="sr" style="top:0"><div class="c" style="left:0px;width:36px"></div><div class="c" style="left:36px;width:34px"></div><div class="c" style="left:70px;width:143px"></div><div class="c" style="left:213px;width:47px"></div><div class="c" style="left:260px;width:144px"></div><div class="c" style="left:404px;width:95px"></div><div class="c" style="left:499px;width:185px"></div><div class="c" style="left:684px;width:96px"></div><div class="c" style="left:780px;width:215px"></div><div class="c" style="left:995px;width:119px"></div><div class="c" style="left:1114px;width:71px"></div><div class="c" style="left:1185px;width:143px"></div><div class="c" style="left:1328px;width:72px"></div><div class="c" style="left:1400px;width:71px"></div><div class="c" style="left:1471px;width:227px"></div><div class="c" style="left:1698px;width:105px"></div><span class="abs" style="left:2px;top:4px"><span class="cj">已选</span>:</span><span class="abs" style="left:1476px;top:4px"><span class="cj">合计</span>1<span class="cj">条</span></span></div>
  <div class="sr" style="top:28px"><div class="c" style="left:0px;width:36px"></div><div class="c" style="left:36px;width:34px"></div><div class="c" style="left:70px;width:143px"></div><div class="c" style="left:213px;width:47px"></div><div class="c" style="left:260px;width:144px"></div><div class="c" style="left:404px;width:95px"></div><div class="c" style="left:499px;width:185px"></div><div class="c" style="left:684px;width:96px"></div><div class="c" style="left:780px;width:215px"></div><div class="c" style="left:995px;width:119px"></div><div class="c" style="left:1114px;width:71px"></div><div class="c" style="left:1185px;width:143px"></div><div class="c" style="left:1328px;width:72px"></div><div class="c" style="left:1400px;width:71px"></div><div class="c" style="left:1471px;width:227px"></div><div class="c" style="left:1698px;width:105px"></div><span class="abs" style="left:2px;top:4px"><span class="cj">汇总</span>:</span><span class="abs" style="left:1476px;top:4px"><span class="cj">合计</span>372<span class="cj">条</span></span></div>
 </div>

 <div id="pager">
  <div class="abs" style="left:10px;top:10px;width:80px;height:23px;border:1px solid #8fb6e6;font-size:14px;line-height:21px;padding-left:5px"><span class="cj">不分页</span><svg class="abs" style="left:57px;top:6px" width="14" height="10" viewBox="0 0 14 10"><path d="M1.5 2l5.5 5.5L12.5 2" stroke="#111" stroke-width="2" fill="none"/></svg></div>
  <div class="psep" style="left:100px"></div>
  <svg class="abs" style="left:115px;top:15px" width="12" height="14" viewBox="0 0 12 14"><path d="M1 1h2.5v12H1z M11 1v12L4 7z" fill="#7fc0f0"/></svg>
  <svg class="abs" style="left:153px;top:15px" width="9" height="14" viewBox="0 0 9 14"><path d="M8 1v12L1 7z" fill="#7fc0f0"/></svg>
  <div class="psep" style="left:177px"></div>
  <span class="abs" style="left:187px;top:13px"><span class="cj">第</span></span>
  <div class="abs" style="left:205px;top:10px;width:42px;height:23px;border:1px solid #8fb6e6;text-align:center;line-height:21px">1</div>
  <span class="abs" style="left:250px;top:13px"><span class="cj">共</span>1<span class="cj">页</span></span>
  <div class="psep" style="left:296px"></div>
  <svg class="abs" style="left:312px;top:15px" width="9" height="14" viewBox="0 0 9 14"><path d="M1 1v12L8 7z" fill="#7fc0f0"/></svg>
  <svg class="abs" style="left:348px;top:15px" width="12" height="14" viewBox="0 0 12 14"><path d="M1 1v12L8 7z M8.5 1H11v12H8.5z" fill="#7fc0f0"/></svg>
  <div class="psep" style="left:373px"></div>
  <span class="abs" style="left:1576px;top:13px"><span class="cj">显示</span>1<span class="cj">到</span>372,<span class="cj">共</span>372<span class="cj">记录</span></span>
 </div>

 <div id="btool">
  <div class="tb" style="left:0;width:69px;background:#1f6e8b;color:#fff"><svg class="abs" style="left:9px;top:7px" width="16" height="16" viewBox="0 0 16 16"><circle cx="8" cy="8" r="7.5" fill="#fff"/><path d="M8 3.8v8.4M3.8 8h8.4" stroke="#1f6e8b" stroke-width="2.2"/></svg><span class="abs" style="left:32px"><span class="cj">添加</span></span></div>
  <div class="tb" style="left:72px;width:70px;background:#1f6e8b;color:#fff"><svg class="abs" style="left:9px;top:7px" width="16" height="16" viewBox="0 0 16 16"><circle cx="8" cy="8" r="7.5" fill="#fff"/><path d="M8 3.8v8.4M3.8 8h8.4" stroke="#1f6e8b" stroke-width="2.2"/></svg><span class="abs" style="left:32px"><span class="cj">补录</span></span></div>
  <div class="tb" style="left:150px;width:80px"><svg class="abs" style="left:3px;top:7px" width="16" height="16" viewBox="0 0 16 16"><path d="M15.5 0.5c-4 0-7.5 2-9.5 5.5H2.5L0.5 9h4l2.5 2.5v4l3-2v-3.5C13.5 8 15.5 4.5 15.5 0.5z M2.5 12c-1 1-1.5 3-1.5 3s2-0.5 3-1.5z" fill="#222"/></svg><span class="abs" style="left:26px"><span class="cj">外配</span></span></div>
  <div class="tb" style="left:222px;width:90px"><svg class="abs" style="left:1px;top:8px;transform:scaleX(-1)" width="19" height="15" viewBox="0 0 19 15"><path d="M0.5 1h11.5v10H0.5z M12.5 4h3.5l2.5 3.5V11h-6z" fill="#222"/><circle cx="4" cy="12" r="2.3" fill="#222" stroke="#fff" stroke-width="1"/><circle cx="14.5" cy="12" r="2.3" fill="#222" stroke="#fff" stroke-width="1"/></svg><span class="abs" style="left:24px"><span class="cj">货运服务</span></span></div>
  <div class="tb" style="left:320px;width:80px"><svg class="abs" style="left:2px;top:7px" width="16" height="16" viewBox="0 0 16 16"><path d="M6.8 0.8h2.4l0.4 2 1.5 0.7 1.7-1.2 1.7 1.7-1.2 1.7 0.7 1.5 2 0.4v2.4l-2 0.4-0.7 1.5 1.2 1.7-1.7 1.7-1.7-1.2-1.5 0.7-0.4 2H6.8l-0.4-2-1.5-0.7-1.7 1.2-1.7-1.7 1.2-1.7-0.7-1.5-2-0.4V6.8l2-0.4 0.7-1.5-1.2-1.7 1.7-1.7 1.7 1.2 1.5-0.7z" fill="#333"/><circle cx="8" cy="8" r="2.4" fill="#fff"/></svg><span class="abs" style="left:25px"><span class="cj">出账单</span></span></div>
  <div class="tb" style="left:397px;width:70px;background:#fa5a1f;color:#fff"><svg class="abs" style="left:8px;top:8px" width="19" height="14" viewBox="0 0 19 14"><path d="M4.5 0.5L0.5 5H3.2V13H11.5L9.2 10.5H6V5H8.5z M14.5 13.5L18.5 9H15.8V1H7.5L9.8 3.5H13V9H10.5z" fill="#fff"/></svg><span class="abs" style="left:33px;font-weight:bold"><span class="cj">移单</span></span></div>
  <div class="tb" style="left:469px;width:98px;background:#fde49b;color:#333"><svg class="abs" style="left:10px;top:7px" width="16" height="16" viewBox="0 0 16 16"><circle cx="8" cy="8" r="7.5" fill="#333"/><path d="M8.2 8.3C9.8 7.6 12.6 8 14.9 9.3 14.5 12.2 12.3 14.6 9.3 15.3 9.6 13.6 8.6 12.8 8.3 11.6 8 10.5 7.4 9 8.2 8.3z M2.6 3.6C3.6 2.4 5 1.5 6.6 1.1 6.3 2.3 5.4 3 4.9 3.9 4.4 4.9 4.6 6 3.4 6.6 2.8 6.9 2.2 6.6 1.5 6.8 1.6 5.6 2 4.5 2.6 3.6z M9.8 1.4C11 1.7 12.1 2.3 13 3.1 12.2 3.6 11 3.4 10.4 2.9z" fill="#fde49b"/></svg><span class="abs" style="left:32px"><span class="cj">路由</span></span></div>
  <div class="tb" style="left:570px;width:98px;background:#e8a74a"></div>
  <div class="tb" style="left:668px;width:100px;background:linear-gradient(to right,#fff,#eef5fd)"><span class="abs" style="left:36px"><span class="cj">客户下单</span></span></div>
  <div class="abs" style="left:753px;top:-7px;height:15px;line-height:15px;padding:0 5px;background:#e8161b;color:#fff;border-radius:8px;font-size:13px;font-weight:bold">440</div>
  <div class="tb" style="left:778px;width:90px"><span class="abs" style="left:3px;font-weight:bold;font-size:15px">¥</span><span class="abs" style="left:24px"><span class="cj">合计费用</span></span></div>
  <div class="tb" style="left:875px;width:90px"><svg class="abs" style="left:2px;top:8px" width="18" height="15" viewBox="0 0 18 15"><path d="M1 0.5V14h16.5" stroke="#333" stroke-width="1.4" fill="none"/><path d="M4.5 6h2v7h-2zM8 3h2v10H8zM11.5 5h2v8h-2zM15 8h2v5h-2z" fill="#333"/></svg><span class="abs" style="left:25px"><span class="cj">报表中心</span></span></div>
  <div class="tb" style="left:968px;width:98px;background:#b3d4f6;color:#4a8fd6"><svg class="abs" style="left:8px;top:8px" width="17" height="14" viewBox="0 0 17 14"><path d="M0.5 0.5h16v13h-16z" fill="#4a8fd6"/><path d="M0.5 4.5h16M0.5 8.5h16M5.5 0.5v13M11 0.5v13" stroke="#b3d4f6" stroke-width="1"/></svg><span class="abs" style="left:32px"><span class="cj">表格设置</span></span></div>
  <div class="tb" style="left:1069px;width:70px;background:#22a775;color:#fff"><svg class="abs" style="left:9px;top:7px" width="13" height="16" viewBox="0 0 13 16"><path d="M0.5 0.5h7.5l4.5 4.5v10.5H0.5z" fill="#fff"/><path d="M3 8h7M3 10.5h7M3 13h7" stroke="#22a775" stroke-width="1.1"/></svg><span class="abs" style="left:32px;font-weight:bold"><span class="cj">导出</span></span></div>
  <div class="tb" style="left:1141px;width:98px;background:#0a73e0;color:#fff"><svg class="abs" style="left:8px;top:7px" width="17" height="15" viewBox="0 0 17 15"><path d="M10 0.5l6.5 5.5-6.5 5.5V8C5 8 2.5 9.5 0.5 13.5 1 8 4 4 10 3.5z" fill="#fff"/></svg><span class="abs" style="left:33px;font-weight:bold"><span class="cj">仓库指令</span></span></div>
  <div class="tb" style="left:1242px;width:113px;background:#10a8ea;color:#fff"><svg class="abs" style="left:9px;top:7px" width="13" height="16" viewBox="0 0 13 16"><path d="M0.5 0.5h7.5l4.5 4.5v10.5H0.5z" fill="#fff"/><path d="M3 8h7M3 10.5h7M3 13h7" stroke="#10a8ea" stroke-width="1.1"/></svg><span class="abs" style="left:33px;font-weight:bold"><span class="cj">业务联系单</span></span></div>
 </div>
</div>

<div id="shadow"></div>
<div id="sthumb"></div>
<div class="abs" style="left:188px;top:48px;width:10px;height:38px;background:linear-gradient(to right,rgba(200,200,200,0.55),rgba(255,255,255,0))"></div>
<div id="cmenu">
<div class="sepl"></div>
<div style="position:absolute;left:0;top:3px;width:176px">
<div class="mitem"><span class="mico"><svg width="16" height="16" viewBox="0 0 16 16"><path d="M11.3 1.2l3.5 3.5-9 9-3.5-3.5z" fill="#111"/><path d="M2.1 10.4l3.5 3.5-4.6 1.1z" fill="#111"/><path d="M3.4 10.5l7.6-7.6" stroke="#fff" stroke-width="0.9"/><path d="M2.6 12.2l1.2 1.2" stroke="#fff" stroke-width="0.9"/></svg></span><span class="mtxt"><span class="cj">查看编辑</span></span></div>
<div class="mitem"><span class="mico"><svg width="18" height="18" viewBox="0 0 18 18"><path d="M1.5 6L5.5 2H11V12.5H1.5z" fill="none" stroke="#111" stroke-width="1.3" stroke-linejoin="round"/><path d="M7 10L11 6H16.5V16.5H7z" fill="#f9f9f9" stroke="#111" stroke-width="1.3" stroke-linejoin="round"/></svg></span><span class="mtxt"><span class="cj">复制新增</span></span></div>
<div class="mitem mact"><span class="mico"><svg width="18" height="18" viewBox="0 0 18 18"><rect x="1" y="1" width="9" height="12.5" rx="0.8" fill="#fff"/><path d="M6.5 5.5H12L16.5 10V17H6.5z" fill="#fff" stroke="#2d87f0" stroke-width="1"/><path d="M12 5.5V10H16.5" fill="none" stroke="#2d87f0" stroke-width="1.2"/></svg></span><span class="mtxt"><span class="cj">新增补单</span></span></div>
<div class="mitem"><span class="mico"><svg width="18" height="18" viewBox="0 0 18 18"><rect x="1" y="1" width="9" height="12.5" fill="#111"/><path d="M6.5 5.5H12L16.5 10V17H6.5z" fill="#fff" stroke="#111" stroke-width="1.3"/><path d="M12 5.5V10H16.5" fill="none" stroke="#111" stroke-width="1.2"/></svg></span><span class="mtxt"><span class="cj">查看补单</span></span></div>
<div class="mitem"><span class="mico"><svg width="16" height="20" viewBox="0 0 16 20"><path d="M5 9V2.6c0-0.8 0.6-1.3 1.2-1.3s1.2 0.5 1.2 1.3V8.5 M7.4 8V6.8c0-0.7 0.5-1.1 1.1-1.1s1.1 0.4 1.1 1.1V8.6 M9.6 8.2V7.5c0-0.7 0.5-1.1 1.1-1.1s1.1 0.4 1.1 1.1V9 M11.8 9V8.4c0-0.7 0.5-1.1 1.1-1.1s1.1 0.4 1.1 1.1v4.8c0 2.5-1.6 5.3-4.8 5.3H8.3c-2.2 0-3.3-1.3-4.4-2.9L1.6 11.6c-0.6-0.9-0.3-1.7 0.4-2s1.4 0 2 0.8L5 12" fill="none" stroke="#111" stroke-width="1.1"/></svg></span><span class="mtxt"><span class="cj">一键投保</span></span></div>
<div class="mitem"><span class="mico"><svg width="16" height="20" viewBox="0 0 16 20"><path d="M5 9V2.6c0-0.8 0.6-1.3 1.2-1.3s1.2 0.5 1.2 1.3V8.5 M7.4 8V6.8c0-0.7 0.5-1.1 1.1-1.1s1.1 0.4 1.1 1.1V8.6 M9.6 8.2V7.5c0-0.7 0.5-1.1 1.1-1.1s1.1 0.4 1.1 1.1V9 M11.8 9V8.4c0-0.7 0.5-1.1 1.1-1.1s1.1 0.4 1.1 1.1v4.8c0 2.5-1.6 5.3-4.8 5.3H8.3c-2.2 0-3.3-1.3-4.4-2.9L1.6 11.6c-0.6-0.9-0.3-1.7 0.4-2s1.4 0 2 0.8L5 12" fill="none" stroke="#111" stroke-width="1.1"/></svg></span><span class="mtxt"><span class="cj">保险服务</span></span></div>
<div class="mitem"><span class="mico"><svg width="16" height="16" viewBox="0 0 16 16"><circle cx="8" cy="8" r="7.5" fill="#111"/><path d="M8.2 8.3C9.8 7.6 12.6 8 14.9 9.3 14.5 12.2 12.3 14.6 9.3 15.3 9.6 13.6 8.6 12.8 8.3 11.6 8 10.5 7.4 9 8.2 8.3z M2.6 3.6C3.6 2.4 5 1.5 6.6 1.1 6.3 2.3 5.4 3 4.9 3.9 4.4 4.9 4.6 6 3.4 6.6 2.8 6.9 2.2 6.6 1.5 6.8 1.6 5.6 2 4.5 2.6 3.6z M9.8 1.4C11 1.7 12.1 2.3 13 3.1 12.2 3.6 11 3.4 10.4 2.9z" fill="#fff"/></svg></span><span class="mtxt"><span class="cj">更新路由</span></span></div>
<div class="mitem"><span class="mico"><span style="font:bold 17px 'Liberation Sans',sans-serif;color:#111">$</span></span><span class="mtxt"><span class="cj">费用明细</span></span></div>
<div class="mitem"><span class="mico"><svg width="16" height="16" viewBox="0 0 16 16"><circle cx="8" cy="8" r="6.3" fill="none" stroke="#111" stroke-width="2"/><path d="M3.8 12.2l8.4-8.4" stroke="#111" stroke-width="2"/></svg></span><span class="mtxt"><span class="cj">扣货</span></span></div>
<div class="mitem"><span class="mico"><svg width="14" height="16" viewBox="0 0 14 16"><path d="M3.5 7V4.8C3.5 2.8 5 1.2 7 1.2s3.5 1.6 3.5 3.6V7" fill="none" stroke="#111" stroke-width="2"/><rect x="1.5" y="7" width="11" height="8" rx="1" fill="#111"/></svg></span><span class="mtxt"><span class="cj">锁单</span></span></div>
<div class="mitem"><span class="mico"><svg width="16" height="16" viewBox="0 0 16 16"><path d="M6.8 0.8h2.4l0.4 2 1.5 0.7 1.7-1.2 1.7 1.7-1.2 1.7 0.7 1.5 2 0.4v2.4l-2 0.4-0.7 1.5 1.2 1.7-1.7 1.7-1.7-1.2-1.5 0.7-0.4 2H6.8l-0.4-2-1.5-0.7-1.7 1.2-1.7-1.7 1.2-1.7-0.7-1.5-2-0.4V6.8l2-0.4 0.7-1.5-1.2-1.7 1.7-1.7 1.7 1.2 1.5-0.7z" fill="#111"/><circle cx="8" cy="8" r="2.4" fill="#f9f9f9"/></svg></span><span class="mtxt"><span class="cj">设置已收款</span></span></div>
<div class="mitem"><span class="mico"><svg width="18" height="16" viewBox="0 0 18 16"><path d="M9 0.5L17.8 15.5H0.2z" fill="#111"/><path d="M9 5v5.2" stroke="#fff" stroke-width="2.2"/><rect x="7.9" y="11.6" width="2.2" height="2.2" fill="#fff"/></svg></span><span class="mtxt"><span class="cj">事故记录</span></span></div>
<div class="mitem"><span class="mico"><svg width="14" height="18" viewBox="0 0 14 18"><path d="M0.5 0.5h8l5 5v12h-13z" fill="#111"/><path d="M8.5 0.5v5h5" fill="#fff" opacity="0.0"/><path d="M9 0.5v4.5h4.5" fill="none" stroke="#fff" stroke-width="1"/></svg></span><span class="mtxt"><span class="cj">文件管理</span></span></div>
<div class="mitem"><span class="mico"><svg width="18" height="16" viewBox="0 0 18 16"><rect x="1" y="1.5" width="16" height="13" rx="1.2" fill="none" stroke="#111" stroke-width="2"/><path d="M4 5.5h10M4 8h10M4 10.5h10" stroke="#111" stroke-width="1.2"/></svg></span><span class="mtxt"><span class="cj">操作日志</span></span></div>
<div class="mitem"><span class="mico"><svg width="20" height="18" viewBox="0 0 20 18"><path d="M1 1h7l9 9-7 7-9-9z" fill="#111"/><circle cx="4.5" cy="4.5" r="1.5" fill="#f9f9f9"/><path d="M10 1h1.5l9 9-7 7-0.8-0.8 6.2-6.2z" fill="#111"/></svg></span><span class="mtxt"><span class="cj">标记栏</span></span></div>
<div class="mitem"><span class="mico"><svg width="18" height="18" viewBox="0 0 18 18"><path d="M9 0.8l5 5.2h-3v5.5H7V6H4z" fill="#111"/><path d="M1 11.5h5v1.5h6v-1.5h5v5.5H1z" fill="#111"/><circle cx="13.5" cy="14.5" r="0.7" fill="#fff"/><circle cx="15.3" cy="14.5" r="0.7" fill="#fff"/></svg></span><span class="mtxt"><span class="cj">上传</span>POD</span></div>
<div class="mitem"><span class="mico"><svg width="16" height="16" viewBox="0 0 16 16"><circle cx="8" cy="8" r="7.5" fill="#111"/><path d="M8 3.8v8.4M3.8 8h8.4" stroke="#fff" stroke-width="2.2"/></svg></span><span class="mtxt"><span class="cj">加入请款单据</span></span></div>
<div class="mitem"><span class="mico"><svg width="14" height="18" viewBox="0 0 14 18"><path d="M0.5 0.5h8l5 5v12h-13z" fill="#111"/><path d="M9 0.5v4.5h4.5" fill="none" stroke="#fff" stroke-width="1"/><path d="M3 9h8M3 11.5h8M3 14h8" stroke="#fff" stroke-width="1.2"/></svg></span><span class="mtxt"><span class="cj">数据模板</span></span><span class="marr">&#9654;</span></div>
<div class="mitem"><span class="mico"><svg width="14" height="14" viewBox="0 0 14 14"><path d="M2 2l10 10M12 2L2 12" stroke="#111" stroke-width="3"/></svg></span><span class="mtxt"><span class="cj">作废</span></span></div>
<div class="mitem"><span class="mico"><svg width="18" height="16" viewBox="0 0 18 16"><path d="M0.5 1.5h3v3h-3zM0.5 6.5h3v3h-3zM0.5 11.5h3v3h-3zM5 1.5h12.5v3H5zM5 6.5h12.5v3H5zM5 11.5h12.5v3H5z" fill="#111"/></svg></span><span class="mtxt"><span class="cj">尺寸录入</span></span></div>
</div>
</div>

<svg class="abs" style="left:0;top:0;pointer-events:none" width="1920" height="855">
 <path d="M508.6 468.6L712.6 334.9L709 330L729 325.5L721 345L715.4 339.1L509.4 469.4z" fill="#f0281c"/>
</svg>
</body></html>
